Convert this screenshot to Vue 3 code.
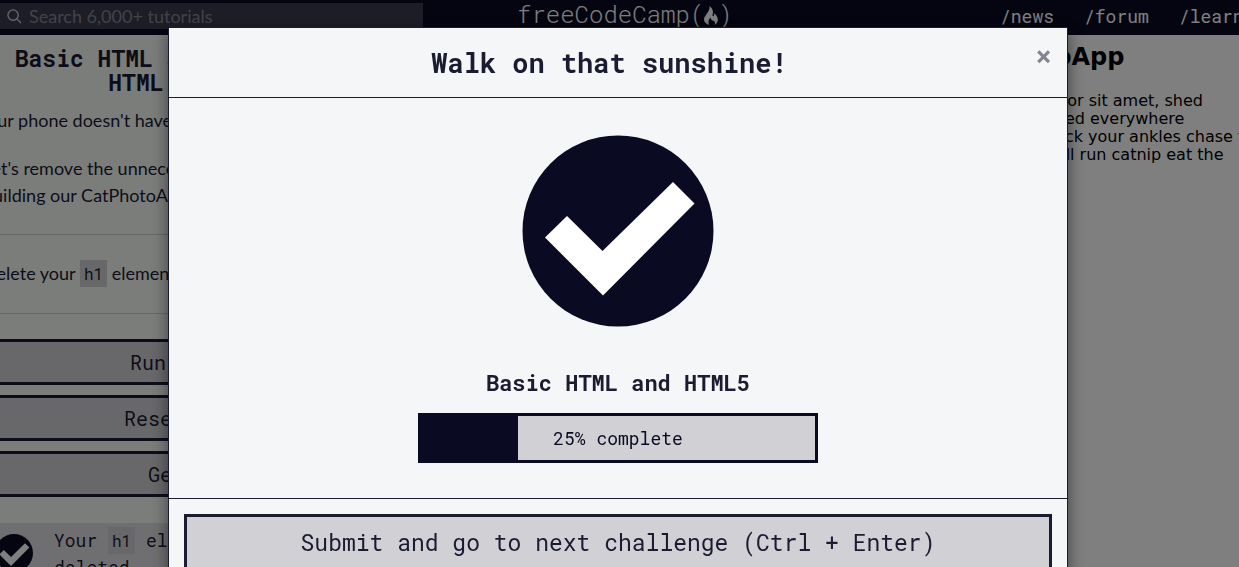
<script setup>
import { ref } from 'vue'

const percent = ref(25)
const query = ref('')
const links = ['/news', '/forum', '/learn']
</script>

<template>
  <div class="page">
    <header class="nav">
      <form class="search" role="search" @submit.prevent>
        <svg class="search-icon" viewBox="0 0 16 16" aria-hidden="true">
          <circle cx="6.5" cy="6.5" r="5.5" />
          <path d="M10.5 10.5 15 15" />
        </svg>
        <input v-model="query" type="search" aria-label="Search" placeholder="Search 6,000+ tutorials" />
      </form>
      <a class="brand" href="#">
        <span>freeCodeCamp</span>
        <span>(</span>
        <svg class="flame" viewBox="0 0 14 19" aria-hidden="true">
          <path d="M5.500 0C9 2.500 9.500 6 8.500 9c-.2 1.500 1.200 1.800 1.500.3.2-.8 0-1.600-.4-2.300C13 9 14.500 13 13.500 15.500 13 17 12 18.300 10.500 19c1-2 .5-3.500-1-4.200C8 14.500 6.500 13.500 6.800 11.500 4.500 13 4 16.500 5 19 2 18 0 16 0 13.500 0 9 6.500 6 5.500 0z" />
        </svg>
        <span>)</span>
      </a>
      <nav class="links">
        <a v-for="link in links" :key="link" href="#">{{ link }}</a>
      </nav>
    </header>

    <main class="workspace">
      <section class="lesson">
        <h2>
          Basic HTML and HTML5: Delete HTML Elements<svg class="done" viewBox="0 0 200 200" aria-hidden="true">
            <circle cx="100" cy="100" r="95" />
            <path d="M27 107 49 85 85 120 155 51 177 73 85 165z" />
          </svg>
        </h2>
        <p>Our phone doesn't have much vertical space.</p>
        <p>Let's remove the unnecessary elements so we can start building our CatPhotoApp.</p>
        <hr />
        <p class="task">Delete your <code>h1</code> element so we can simplify our view.</p>
        <hr />
        <div class="actions">
          <button type="button">Run the Tests</button>
          <button type="button">Reset All Code</button>
          <button type="button">Get a hint</button>
        </div>
        <div class="result">
          <svg viewBox="0 0 200 200" aria-hidden="true">
            <circle cx="100" cy="100" r="95" />
            <path d="M27 107 49 85 85 120 155 51 177 73 85 165z" />
          </svg>
          <p>Your <code>h1</code> element should be deleted.</p>
        </div>
      </section>
      <section class="preview">
        <h2>CatPhotoApp</h2>
        <p>Kitty ipsum dolor sit amet, shed everywhere shed everywhere stretching attack your ankles chase the red dot, hairball run catnip eat the grass sniff.</p>
      </section>
    </main>

    <div class="backdrop">
      <div class="modal" role="dialog" aria-modal="true" aria-labelledby="modal-title">
        <div class="modal-head">
          <h1 id="modal-title">Walk on that sunshine!</h1>
          <button class="close" type="button" aria-label="Close">×</button>
        </div>
        <div class="modal-body">
          <svg class="check" viewBox="0 0 200 200" aria-hidden="true">
            <circle cx="100" cy="100" r="95.500" />
            <path d="M27 106.500 49 85 84.500 120 155 51 176.500 72.500 85 164.500z" />
          </svg>
          <h2>Basic HTML and HTML5</h2>
          <div class="progress" role="progressbar" :aria-valuenow="percent" aria-valuemin="0" aria-valuemax="100">
            <div class="fill" :style="{ width: percent + '%' }"></div>
            <span>{{ percent }}% complete</span>
          </div>
        </div>
        <div class="modal-foot">
          <button type="button">Submit and go to next challenge (Ctrl + Enter)</button>
        </div>
      </div>
    </div>
  </div>
</template>

<style>
html,
body {
  margin: 0;
  height: 100%;
  overflow: hidden;
}
#app {
  height: 100%;
}
</style>

<style scoped>
* {
  box-sizing: border-box;
}
.page {
  --mono: 'Roboto Mono', 'DejaVu Sans Mono', monospace;
  height: 100%;
  display: flex;
  flex-direction: column;
  overflow: hidden;
  color: #1b1b32;
  font-family: Lato, sans-serif;
  font-size: 18px;
}
h1,
h2,
p {
  margin: 0;
}
button {
  margin: 0;
  font-family: var(--mono);
  color: #1b1b32;
  cursor: pointer;
}
.nav {
  flex: none;
  height: 35px;
  display: grid;
  grid-template-columns: 423px 1fr 254px;
  align-items: center;
  background: #0a0a23;
}
.search {
  height: 26px;
  display: flex;
  align-items: center;
  gap: 7px;
  padding-left: 7px;
  margin-bottom: 3px;
  background: #3b3b4f;
}
.search-icon {
  width: 15px;
  height: 15px;
  fill: none;
  stroke: #d0d0d5;
  stroke-width: 1.4;
}
.search input {
  flex: 1;
  min-width: 0;
  padding: 0;
  border: 0;
  outline: 0;
  background: none;
  color: #fff;
  font: 18px/26px Lato, sans-serif;
}
.search input::placeholder {
  color: #858591;
  opacity: 1;
}
.brand {
  display: flex;
  align-items: center;
  padding-left: 94px;
  margin-bottom: 7px;
  color: #fff;
  font: 300 24px/28px var(--mono);
  text-decoration: none;
}
.flame {
  width: 14px;
  height: 19px;
  margin-top: 2px;
  fill: #fff;
}
.links {
  display: flex;
  gap: 30px;
  padding-left: 15px;
  margin-bottom: 3px;
}
.links a {
  color: #fff;
  font: 18px/24px var(--mono);
  text-decoration: none;
}
.workspace {
  flex: 1;
  min-height: 0;
  display: flex;
  justify-content: space-between;
  background: #fff;
}
.lesson {
  flex: none;
  width: 450px;
  margin-left: -17px;
  padding-top: 11px;
  background: #f7fbf7;
  line-height: 27px;
}
.lesson h2 {
  margin-bottom: 13px;
  padding: 0 24px;
  font: bold 23px/24px var(--mono);
  text-align: center;
}
.lesson p + p {
  margin-top: 21px;
}
.done {
  width: 16px;
  height: 16px;
  margin-left: 4px;
}
svg circle {
  fill: #0a0a23;
}
svg circle + path {
  fill: #fff;
}
.search-icon circle,
.search-icon circle + path {
  fill: none;
}
hr {
  height: 1px;
  margin: 25px 0;
  border: 0;
  background: #d0d0d5;
}
.task {
  padding-bottom: 1px;
}
code {
  padding: 3px 4px;
  background: #d0d0d5;
  font: 16px/20px var(--mono);
}
.actions {
  display: flex;
  flex-direction: column;
  gap: 10px;
}
.actions button {
  height: 46px;
  border: 3px solid #1b1b32;
  background: #d0d0d5;
  font-size: 20px;
}
.result {
  display: flex;
  gap: 20px;
  height: 80px;
  margin-top: 26px;
  padding: 4px 11px;
  background: #dfdfe2;
  font-family: var(--mono);
}
.result svg {
  flex: none;
  width: 40px;
  height: 40px;
  margin-top: 6px;
}
.preview {
  flex: none;
  width: 320px;
  margin-right: -28px;
  padding-top: 8px;
  color: #000;
  font: 16px/18px 'DejaVu Sans', sans-serif;
}
.preview h2 {
  margin-bottom: 21px;
  font-size: 24px;
  line-height: 28px;
}
.backdrop {
  position: fixed;
  inset: 0;
  overflow: hidden;
  padding: 27px 3px 0 0;
  background: rgba(0, 0, 0, 0.5);
}
.modal {
  max-width: 900px;
  margin: 0 auto;
  border: 1px solid #1b1b32;
  background: #f5f6f7;
  box-shadow: 0 5px 15px rgba(0, 0, 0, 0.5);
}
.modal-head {
  display: flex;
  align-items: flex-start;
  padding: 15px;
  border-bottom: 1px solid #1b1b32;
}
.modal-head h1 {
  flex: 1;
  font: bold 27px/39px var(--mono);
  text-align: center;
}
.close {
  width: 17px;
  padding: 0;
  border: 0;
  background: none;
  color: #858591;
  font: bold 28px/25px var(--mono);
}
.modal-body {
  display: flex;
  flex-direction: column;
  align-items: center;
  padding: 33px 15px 35px;
}
.check {
  width: 200px;
  height: 200px;
}
.modal-body h2 {
  margin: 37px 0 15px;
  font: bold 22px/30px var(--mono);
}
.progress {
  position: relative;
  width: 400px;
  max-width: 100%;
  height: 50px;
  background: #d0d0d5;
  box-shadow: inset 0 0 0 3px #0a0a23;
  color: #0a0a23;
  font: 18px/50px var(--mono);
  text-align: center;
}
.fill {
  position: absolute;
  inset: 0 auto 0 0;
  background: #0a0a23;
}
.modal-foot {
  padding: 15px;
  border-top: 1px solid #1b1b32;
}
.modal-foot button {
  width: 100%;
  padding: 9px;
  border: 3px solid #1b1b32;
  background: #d0d0d5;
  font-size: 23px;
  line-height: 32px;
}
</style>
